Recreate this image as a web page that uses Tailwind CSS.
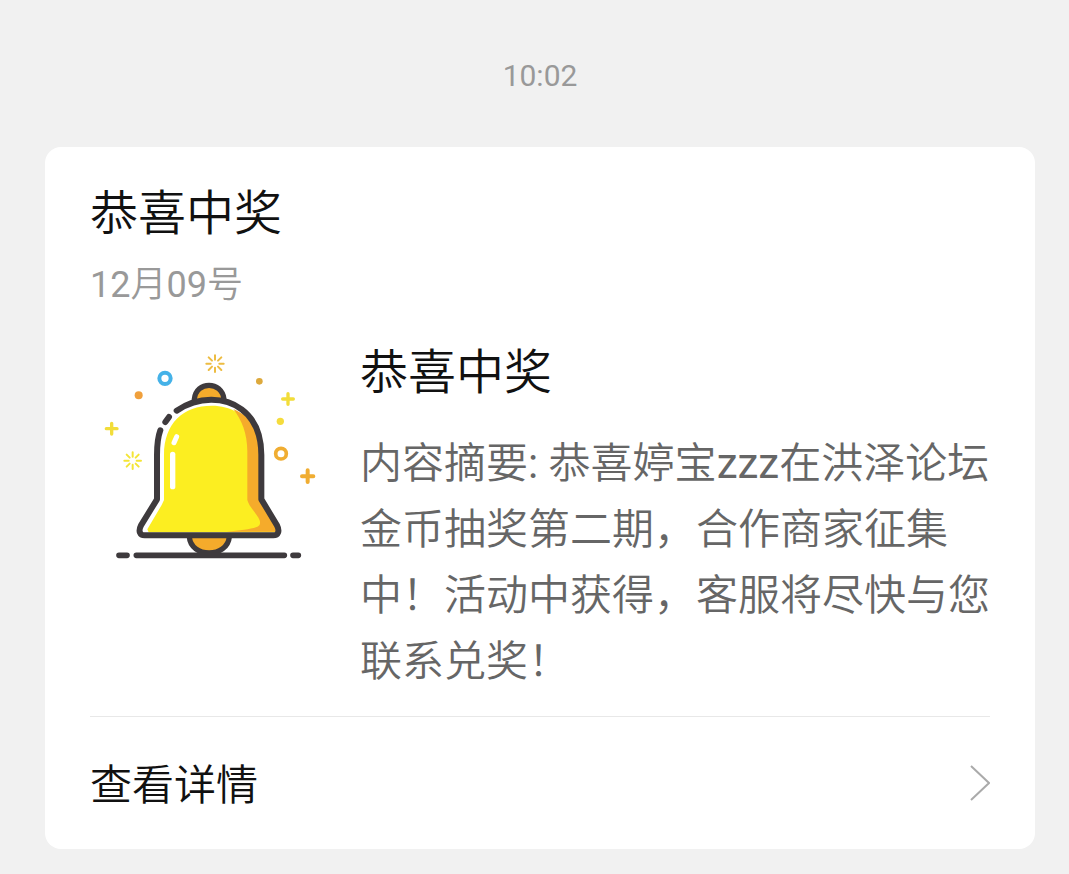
<!DOCTYPE html>
<html lang="zh-CN">
<head>
    <meta charset="UTF-8">
    <meta name="viewport" content="width=device-width, initial-scale=1.0">
    <title>恭喜中奖</title>
    <script src="https://cdn.jsdelivr.net/npm/@tailwindcss/browser@4"></script>
</head>
<body class="min-h-screen bg-[#f1f1f1] font-[Roboto,'Noto_Sans_CJK_SC',sans-serif] font-[350] text-[#111111]">
    <main class="pl-[45px] pr-[34px] pt-12 pb-6">
        <time class="block text-center text-[30px] leading-[56px] font-normal text-[#999999]">10:02</time>

        <article class="mt-[43px] bg-white rounded-2xl px-[45px]">
            <header class="pt-[34px]">
                <h1 class="text-[48px] leading-[66px] font-[350]">恭喜中奖</h1>
                <p class="mt-[14px] text-[36px] leading-[48px] text-[#999999]"><span class="font-normal">12</span>月<span class="font-normal">09</span>号</p>
            </header>

            <div class="mt-[29px] pb-[21px] flex gap-[30px] border-b border-[#e8e8e8]">
                <!-- Bell -->
                <svg class="w-60 h-60 shrink-0" viewBox="0 -6 720 720" fill="none" stroke-linecap="round" stroke-linejoin="round" role="img" aria-label="铃铛">
                    <!-- body -->
                    <path d="M222 480V345C222 250 280 197 365 197C425 197 460 225 490 260C508 290 515 320 515 350V478L562 568L555 577H176L172 568L215 495Z" fill="#fcee21"/>
                    <path d="M430 207C460 220 485 240 497 265C510 290 515 320 515 350V478L565 575H410C460 570 500 566 508 556C520 535 480 510 472 480V335C472 280 455 240 430 207Z" fill="#f5ab2b"/>
                    <path d="M252 308L260 290" stroke="#fff" stroke-width="15"/>
                    <path d="M248 343V440" stroke="#fff" stroke-width="16"/>
                    <!-- crown and clapper -->
                    <path d="M313 178C316 120 398 120 402 178Z" fill="#f5ab2b"/>
                    <path d="M313 178C318 122 396 122 402 178" stroke="#3e3a3d" stroke-width="16"/>
                    <path d="M298 590C302 655 412 655 418 590Z" fill="#f5ab2b"/>
                    <path d="M298 590C302 655 412 655 418 590" stroke="#3e3a3d" stroke-width="16"/>
                    <!-- outline -->
                    <path d="M260 212C325 168 405 170 455 208C495 238 514 285 514 345V478L561 556C570 574 564 586 550 586H164C150 586 144 574 153 556L201 478V345C201 315 204 290 211 271" stroke="#3e3a3d" stroke-width="18"/>
                    <path d="M226 246L237 231" stroke="#3e3a3d" stroke-width="18"/>
                    <!-- ground -->
                    <path d="M87 646H111M139 646H583M609 646H625" stroke="#3e3a3d" stroke-width="17"/>
                    <!-- confetti -->
                    <circle cx="225" cy="115" r="17" stroke="#45b2e8" stroke-width="12"/>
                    <circle cx="573" cy="341" r="16" stroke="#f0ad32" stroke-width="11"/>
                    <circle cx="146" cy="166" r="12" fill="#f0a03c"/>
                    <circle cx="508" cy="124" r="10" fill="#dda93c"/>
                    <circle cx="571" cy="244" r="11" fill="#f5dc3c"/>
                    <path d="M594 161V193M578 177H610" stroke="#f2dd3a" stroke-width="10"/>
                    <path d="M65 250V282M49 266H81" stroke="#f2dd3a" stroke-width="10"/>
                    <path d="M653 391V426M636 409H670" stroke="#f0ad32" stroke-width="12"/>
                    <path d="M375 46V59M375 83V96M349 71H362M388 71H401M356 52L366 62M384 80L394 90M394 52L384 62M366 80L356 90" stroke="#edbc42" stroke-width="6"/>
                    <path d="M128 337V350M128 374V387M103 362H116M140 362H153M110 344L119 353M137 371L146 380M146 344L137 353M119 371L110 380" stroke="#f4e535" stroke-width="6"/>
                </svg>
                <div class="flex-1 min-w-0">
                    <h2 class="pt-[2px] text-[48px] leading-[66px] font-[350]">恭喜中奖</h2>
                    <p class="mt-[25px] text-[42px] leading-[66px] text-[#666666]">内容摘要<span class="font-normal">: </span>恭喜婷宝<span class="font-normal">zzz</span>在洪泽论坛金币抽奖第二期，合作商家征集中！活动中获得，客服将尽快与您联系兑奖！</p>
                </div>
            </div>

            <a href="#" class="h-[132px] flex items-center justify-between text-[42px] leading-[66px]">
                <span class="pt-[6px]">查看详情</span>
                <svg class="w-5 h-9" viewBox="0 0 20 36" fill="none" stroke="#aaaaaa" stroke-width="2" aria-hidden="true">
                    <path d="M1 1L19 18L1 35"/>
                </svg>
            </a>
        </article>
    </main>
</body>
</html>
